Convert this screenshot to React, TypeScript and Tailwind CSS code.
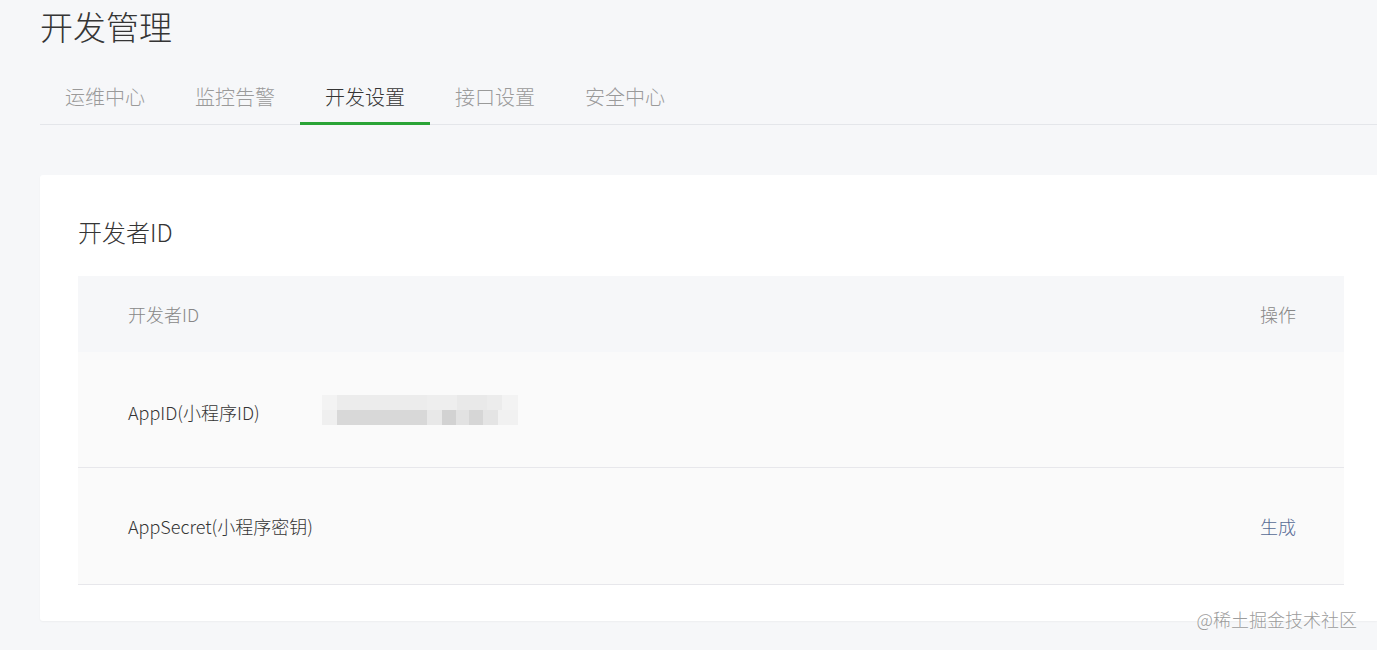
const tabs = ["运维中心", "监控告警", "开发设置", "接口设置", "安全中心"];

function BlurredValue() {
  // mosaic used to hide the real AppID
  return (
    <div className="flex flex-col w-[196px]">
      <div className="flex h-[15px]">
        <div className="w-[15px] bg-[#f3f3f3]" />
        <div className="w-[90px] bg-[#ececec]" />
        <div className="w-[30px] bg-[#eeeeee]" />
        <div className="w-[30px] bg-[#e9e9e9]" />
        <div className="w-[15px] bg-[#ececec]" />
        <div className="w-[16px] bg-[#f3f3f3]" />
      </div>
      <div className="flex h-[15px]">
        <div className="w-[15px] bg-[#efefef]" />
        <div className="w-[90px] bg-[#d8d8d8]" />
        <div className="w-[15px] bg-[#e8e8e8]" />
        <div className="w-[14px] bg-[#d2d2d2]" />
        <div className="w-[13px] bg-[#e2e2e2]" />
        <div className="w-[14px] bg-[#d6d6d6]" />
        <div className="w-[15px] bg-[#e4e4e4]" />
        <div className="w-[20px] bg-[#f1f1f1]" />
      </div>
    </div>
  );
}

export default function App() {
  return (
    <div
      className="relative min-h-screen h-[650px] overflow-hidden bg-[#f6f7f9] pl-10 font-light"
      style={{ fontFamily: '"Noto Sans CJK SC", "Noto Sans", sans-serif' }}
    >
      <h1 className="text-[33px] leading-[52px] text-[#353535] font-light">开发管理</h1>

      <div className="mt-[18px] flex h-[55px] border-b border-[#e4e6ea]">
        {tabs.map((t) => {
          const active = t === "开发设置";
          return (
            <div
              key={t}
              className={
                active
                  ? "relative w-[130px] flex items-center justify-center text-[20px] text-[#353535]"
                  : "relative w-[130px] flex items-center justify-center text-[20px] text-[#9a9a9a]"
              }
            >
              {t}
              {active && <div className="absolute left-0 right-0 bottom-[-1px] h-[3px] bg-[#2aa437]" />}
            </div>
          );
        })}
      </div>

      <div className="mt-[50px] h-[446px] bg-white rounded-l-[3px] shadow-[0_1px_2px_rgba(0,0,0,0.04)] pl-[38px] pr-[33px] pt-[39px]">
        <h2 className="text-[24px] leading-[36px] text-[#353535] font-light">开发者ID</h2>

        <div className="mt-[26px] text-[18px]">
          <div className="flex items-center justify-between h-[76px] bg-[#f6f7f9] pl-[50px] pr-[48px] text-[#888888]">
            <span>开发者ID</span>
            <span>操作</span>
          </div>
          <div className="flex items-center h-[116px] bg-[#fafafa] border-b border-[#e7e7eb] pl-[50px] pr-[48px] text-[#353535]">
            <span className="w-[194px] mt-[5px]">AppID(小程序ID)</span>
            <BlurredValue />
          </div>
          <div className="flex items-center justify-between h-[117px] bg-[#fafafa] border-b border-[#e7e7eb] pl-[50px] pr-[48px] text-[#353535]">
            <span>AppSecret(小程序密钥)</span>
            <span className="text-[#576b95]">生成</span>
          </div>
        </div>
      </div>

      <div className="absolute right-[20px] top-[606px] text-[18px] text-[#9c9c9c] [text-shadow:0_0_2px_#fff]">
        @稀土掘金技术社区
      </div>
    </div>
  );
}
